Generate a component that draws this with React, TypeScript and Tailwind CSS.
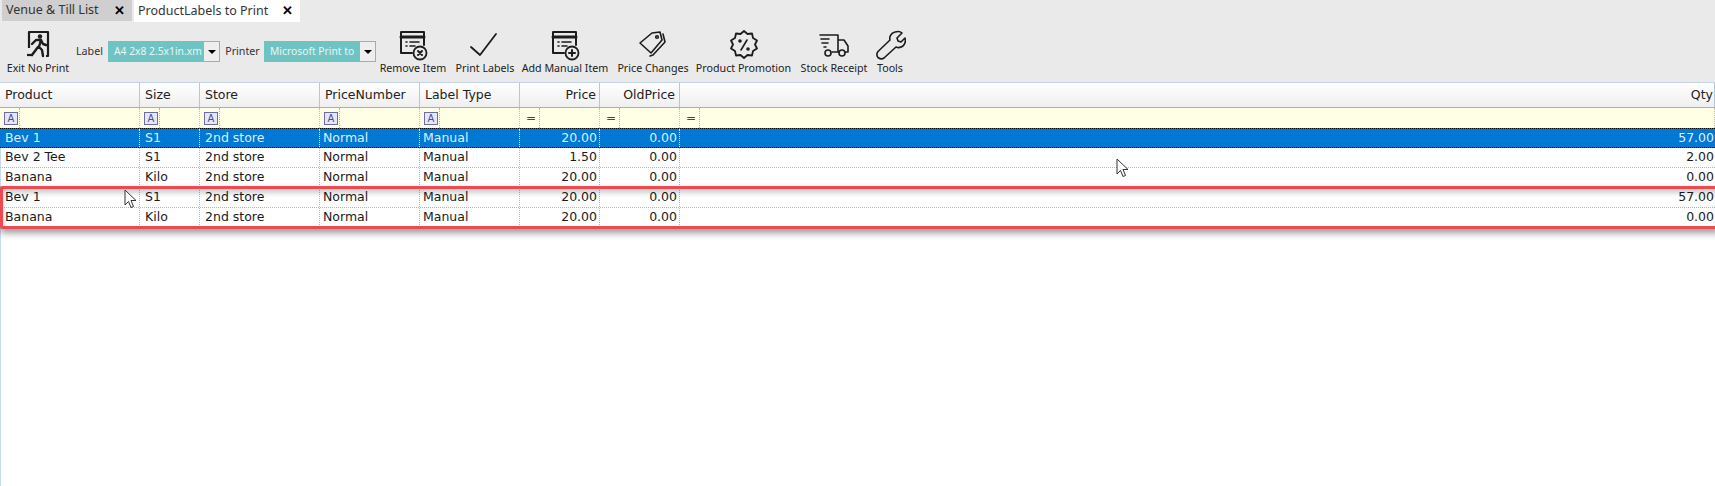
import type { ReactNode } from 'react';

const gridCols = 'grid grid-cols-[140px_60px_120px_100px_100px_80px_80px_1fr]';

const columns = [
  { name: 'Product', filter: 'A', pad: 'pl-[5px]', headPad: 'pl-[5px]' },
  { name: 'Size', filter: 'A', pad: 'pl-[5px]', headPad: 'pl-[5px]' },
  { name: 'Store', filter: 'A', pad: 'pl-[5px]', headPad: 'pl-[5px]' },
  { name: 'PriceNumber', filter: 'A', pad: 'pl-[3px]', headPad: 'pl-[5px]' },
  { name: 'Label Type', filter: 'A', pad: 'pl-[3px]', headPad: 'pl-[5px]' },
  { name: 'Price', filter: '=', right: true, pad: 'pr-[2px]', headPad: 'pr-[3px]' },
  { name: 'OldPrice', filter: '=', right: true, pad: 'pr-[2px]', headPad: 'pr-[4px]' },
  { name: 'Qty', filter: '=', right: true, pad: 'pr-[1px]', headPad: 'pr-[1px]' },
];

const rows = [
  ['Bev 1', 'S1', '2nd store', 'Normal', 'Manual', '20.00', '0.00', '57.00'],
  ['Bev 2 Tee', 'S1', '2nd store', 'Normal', 'Manual', '1.50', '0.00', '2.00'],
  ['Banana', 'Kilo', '2nd store', 'Normal', 'Manual', '20.00', '0.00', '0.00'],
  ['Bev 1', 'S1', '2nd store', 'Normal', 'Manual', '20.00', '0.00', '57.00'],
  ['Banana', 'Kilo', '2nd store', 'Normal', 'Manual', '20.00', '0.00', '0.00'],
];

function Icon({ children }: { children: ReactNode }) {
  return (
    <svg width="32" height="32" viewBox="0 0 32 32" fill="none" stroke="#1c1c1c" strokeWidth="1.6" strokeLinecap="round" strokeLinejoin="round">
      {children}
    </svg>
  );
}

function ExitIcon() {
  return (
    <Icon>
      <path d="M7 19V3h19v24h-2" strokeWidth="2.200" strokeLinecap="butt" />
      <path d="M5 26h6" strokeWidth="2.200" strokeLinecap="butt" />
      <circle cx="18" cy="7.500" r="2.200" fill="#1c1c1c" stroke="none" />
      <path d="M10 15l4-4h5l-2 7 3 3 1 6M19 11l2 4 3 1M16 18l-3 4-3 4" strokeWidth="2.400" />
    </Icon>
  );
}

function WindowIcon({ plus }: { plus?: boolean }) {
  return (
    <Icon>
      <path d="M15 24H4V3h23v13" strokeWidth="2" />
      <path d="M4 8h23" strokeWidth="3" />
      <path d="M9 13h1M13 13h9M9 17h1M13 17h5" />
      <circle cx="23" cy="24" r="6.500" strokeWidth="1.800" />
      {plus ? <path d="M23 21v6M20 24h6" strokeWidth="2" /> : <path d="M21 22l4 4M25 22l-4 4" strokeWidth="2" />}
    </Icon>
  );
}

function CheckIcon() {
  return (
    <Icon>
      <path d="M2 18l9 8L27 5" strokeWidth="1.800" />
    </Icon>
  );
}

function TagIcon() {
  return (
    <Icon>
      <path d="M3 14L15 4l8-1 2 8-11 13z" />
      <circle cx="20" cy="8" r="1.300" />
      <path d="M26 5l2 8-12 13-3 1" />
    </Icon>
  );
}

function PromoIcon() {
  return (
    <Icon>
      <path d="M16 2l3.500 3 4.500-.5 1 4.500 4 2.500-2 4 2 4-4 2.500-1 4.500-4.500-.5L16 29l-3.500-3-4.500.5-1-4.500-4-2.500 2-4-2-4 4-2.500 1-4.500 4.500.5z" strokeWidth="1.800" />
      <path d="M19 11l-6 10" />
      <circle cx="12" cy="12" r="1" fill="#1c1c1c" />
      <circle cx="20" cy="20" r="1" fill="#1c1c1c" />
    </Icon>
  );
}

function TruckIcon() {
  return (
    <Icon>
      <path d="M2 6h18v17H14M20 11h6l4 6v6h-3M20 23h1" />
      <path d="M3 10h8M4 14h6M6 18h2" />
      <circle cx="10" cy="24" r="3" />
      <circle cx="24" cy="24" r="3" />
    </Icon>
  );
}

function WrenchIcon() {
  return (
    <Icon>
      <path d="M21 3c3-1 6 0 7 1l-5 5 1 3 3 1 4-4c1 3 0 6-2 8-2 1.500-5 2-7 1L10 29c-2 1.500-4 1-6-.5-1.500-2-1.500-4 0-6L16 11c-1-3 1-7 5-8z" />
    </Icon>
  );
}

function ToolButton({ label, icon, className }: { label: string; icon: ReactNode; className: string }) {
  return (
    <div className={`flex flex-col items-center shrink-0 ${className}`}>
      <div className="h-[32px] w-[32px]">{icon}</div>
      <span className="text-[10.7px] leading-[14px] whitespace-nowrap text-[#222]">{label}</span>
    </div>
  );
}

function SelectBox({ value, className }: { value: string; className: string }) {
  return (
    <div className={`h-[21px] flex items-center bg-[#6fc3c3] border border-[#6fc3c3] shrink-0 ${className}`}>
      <span className="flex-1 pl-[5px] text-[10.300px] text-[#e6f6f5] whitespace-nowrap overflow-hidden">{value}</span>
      <span className="h-[19px] w-[15px] bg-[#eeeeee] flex items-center justify-center">
        <span className="w-0 h-0 border-x-[4px] border-x-transparent border-t-[4px] border-t-black" />
      </span>
    </div>
  );
}

function Cursor({ className }: { className: string }) {
  return (
    <svg className={`absolute ${className}`} width="14" height="20" viewBox="0 0 14 20" fill="#fff" stroke="#333" strokeWidth="1">
      <path d="M1 1v15l3.500-3.500 2.500 6 2.500-1-2.500-6h5z" />
    </svg>
  );
}

export default function App() {
  return (
    <div className="relative h-[486px] w-[1715px] overflow-hidden bg-white font-['DejaVu_Sans',sans-serif] text-[#1a1a1a]">
      <div className="bg-[#eaeaea] h-[82px]">
        {/* tabs */}
        <div className="flex h-[22px] pl-[2px] gap-[2px] text-[12.5px]">
          <div className="w-[130px] h-[21px] bg-[#cfcfcf] flex items-center pl-[4px] text-[#333] font-['Noto_Sans',sans-serif]">
            <span className="flex-1 whitespace-nowrap">Venue &amp; Till List</span>
            <span className="pr-[7px] text-[13px] font-bold text-black">✕</span>
          </div>
          <div className="w-[166px] h-[22px] bg-white flex items-center pl-[4px] text-[#333] font-['Noto_Sans',sans-serif]">
            <span className="flex-1 whitespace-nowrap">ProductLabels to Print</span>
            <span className="pr-[7px] text-[13px] font-bold text-black">✕</span>
          </div>
        </div>

        {/* toolbar */}
        <div className="flex items-start pt-[7px] font-['Noto_Sans',sans-serif]">
          <ToolButton label="Exit No Print" icon={<ExitIcon />} className="w-[76px]" />
          <div className="flex items-center h-[21px] mt-[12px]">
            <span className="text-[10.7px] w-[26px] mr-[6px] text-right text-[#333]">Label</span>
            <SelectBox value="A4 2x8 2.5x1in.xm" className="w-[112px]" />
            <span className="text-[10.7px] w-[35px] ml-[5px] mr-[4px] text-center text-[#333]">Printer</span>
            <SelectBox value="Microsoft Print to" className="w-[112px]" />
          </div>
          <ToolButton label="Remove Item" icon={<WindowIcon />} className="w-[66px] ml-[4px]" />
          <ToolButton label="Print Labels" icon={<CheckIcon />} className="w-[58px] ml-[10px]" />
          <ToolButton label="Add Manual Item" icon={<WindowIcon plus />} className="w-[86px] ml-[8px]" />
          <ToolButton label="Price Changes" icon={<TagIcon />} className="w-[70px] ml-[10px]" />
          <ToolButton label="Product Promotion" icon={<PromoIcon />} className="w-[95px] ml-[8px]" />
          <ToolButton label="Stock Receipt" icon={<TruckIcon />} className="w-[68px] ml-[9px]" />
          <ToolButton label="Tools" icon={<WrenchIcon />} className="w-[28px] ml-[8px]" />
        </div>
      </div>

      {/* header */}
      <div className={`${gridCols} h-[26px] border-t border-[#c3d5e4] border-b border-b-[#9fb5ad]`}>
        {columns.map((col) => (
          <div
            key={col.name}
            className={`bg-gradient-to-b from-white to-[#efefef] border-r border-[#b8c8d0] flex items-center text-[12.5px] text-[#222] ${col.headPad} ${col.right ? 'justify-end' : ''}`}
          >
            {col.name}
          </div>
        ))}
      </div>

      {/* filter row */}
      <div className={`${gridCols} h-[20px] bg-[#ffffe5]`}>
        {columns.map((col) => (
          <div key={col.name} className="flex items-center h-full border-r border-dotted border-[#c4c4b0] pl-[4px]">
            {col.filter === 'A' && (
              <span className="w-[14px] h-[13px] border border-[#6a6ab0] bg-[#e6e8f6] text-[10px] leading-[12px] text-center text-[#4a4aa0]">A</span>
            )}
            {col.filter === '=' && <span className="w-[14px] text-[12px] leading-[12px] text-center text-[#444]">=</span>}
            <span className="h-full ml-[1px] border-r border-dotted border-[#b0b0a0]" />
          </div>
        ))}
      </div>

      {/* rows */}
      <div className="h-[358px] border-l border-[#c6daf0]">
        {rows.map((row, i) => (
          <div
            key={i}
            className={`${gridCols} -ml-px h-[20px] text-[12.5px] leading-[17px] ${i === 0 ? 'bg-[#0078d4] text-[#dff0ff] border-y border-dotted border-black' : 'border-b border-dotted border-[#b4b4b4]'}`}
          >
            {row.map((value, j) => (
              <div
                key={j}
                className={`flex items-start whitespace-nowrap ${columns[j].pad} ${columns[j].right ? 'justify-end' : ''} ${j < 7 ? 'border-r border-dotted' : ''} ${i === 0 ? 'border-[#cfe4f7]' : 'border-[#b4b4b4]'}`}
              >
                {value}
              </div>
            ))}
          </div>
        ))}
      </div>

      {/* red highlight drawn over the grid */}
      <div className="absolute left-0 top-[186px] w-[1720px] h-[43px] border-[3px] border-[#ea4a50] rounded-[2px] shadow-[0_4px_7px_rgba(0,0,0,0.4),inset_0_4px_5px_rgba(0,0,0,0.2)]" />

      <Cursor className="left-[124px] top-[189px]" />
      <Cursor className="left-[1116px] top-[158px]" />
    </div>
  );
}
